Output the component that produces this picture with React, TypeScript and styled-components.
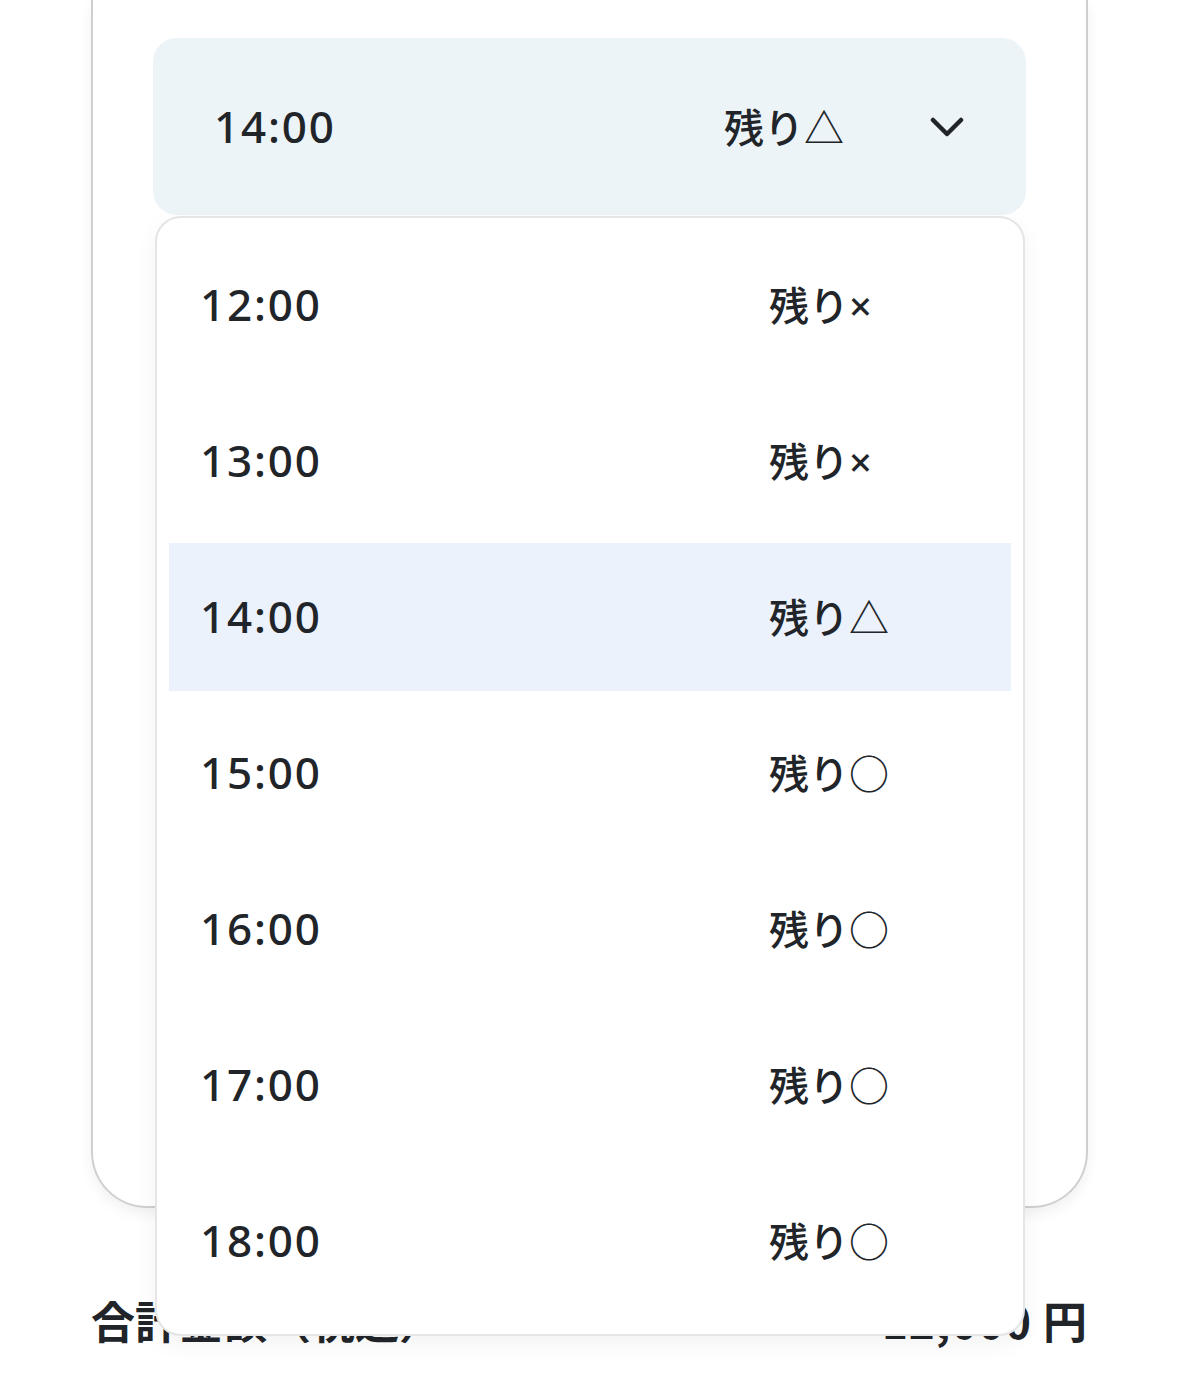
import * as React from "react";
import styled, { createGlobalStyle } from "styled-components";

const GlobalStyle = createGlobalStyle`
  html, body {
    margin: 0;
    padding: 0;
    background: #ffffff;
  }
  body {
    font-family: "Noto Sans", "Noto Sans CJK JP", sans-serif;
    color: #212529;
  }
`;

const SPage = styled.div`
  width: 1179px;
  height: 1376px;
  overflow: hidden;
  padding: 0 91px;
  box-sizing: border-box;
`;

const SCard = styled.div`
  position: relative;
  border: 2px solid #cfcfcf;
  border-top: none;
  border-radius: 0 0 56px 56px;
  box-shadow: 0 6px 14px rgba(0, 0, 0, 0.06);
  padding: 38px 60px 0;
  height: 1208px;
  box-sizing: border-box;
`;

const SSelect = styled.div`
  position: relative;
`;

const STrigger = styled.div`
  height: 177px;
  box-sizing: border-box;
  border-radius: 24px;
  background: #edf4f8;
  display: flex;
  align-items: center;
  padding: 0 62px 2px 61px;
`;

const STime = styled.span`
  flex: 1;
  font-size: 44px;
  font-weight: 500;
  letter-spacing: 1.8px;
`;

const SStatus = styled.span<{ $width: number }>`
  width: ${(p) => p.$width}px;
  white-space: nowrap;
  font-size: 40px;
  font-weight: 500;
`;

const SChevron = styled.svg`
  width: 34px;
  height: 22px;
  display: block;
  margin-top: 4px;
`;

const SMenu = styled.ul`
  position: absolute;
  top: 178px;
  left: 2px;
  right: 1px;
  margin: 0;
  list-style: none;
  background: #ffffff;
  border: 2px solid #e4e5e7;
  border-radius: 26px;
  box-shadow: 0 8px 24px rgba(0, 0, 0, 0.05);
  padding: 13px 12px 19px;
  display: flex;
  flex-direction: column;
  gap: 8px;
  z-index: 2;
`;

const SOption = styled.li<{ $active?: boolean }>`
  height: 148px;
  display: flex;
  align-items: center;
  padding: 0 0 2px 31px;
  box-sizing: border-box;
  background: ${(p) => (p.$active ? "#ebf2fc" : "transparent")};
`;

const STotal = styled.div`
  display: flex;
  align-items: center;
  justify-content: space-between;
  margin-top: 82px;
  font-family: "Noto Sans CJK JP", sans-serif;
  font-size: 44px;
  font-weight: 700;
  line-height: 60px;
`;

const SPrice = styled.span`
  letter-spacing: 1px;
`;

const slots = [
  { time: "12:00", status: "残り×" },
  { time: "13:00", status: "残り×" },
  { time: "14:00", status: "残り△" },
  { time: "15:00", status: "残り○" },
  { time: "16:00", status: "残り○" },
  { time: "17:00", status: "残り○" },
  { time: "18:00", status: "残り○" },
];

const App = () => {
  const selected = "14:00";
  const current = slots.find((s) => s.time === selected)!;

  return (
    <>
      <GlobalStyle />
      <SPage>
        <SCard>
          <SSelect>
            <STrigger>
              <STime>{current.time}</STime>
              <SStatus $width={206}>{current.status}</SStatus>
              <SChevron viewBox="0 0 34 22">
                <polyline
                  points="3,3 17,17 31,3"
                  fill="none"
                  stroke="#212529"
                  strokeWidth="4.5"
                  strokeLinecap="round"
                  strokeLinejoin="round"
                />
              </SChevron>
            </STrigger>
            <SMenu>
              {slots.map((s) => (
                <SOption key={s.time} $active={s.time === selected}>
                  <STime>{s.time}</STime>
                  <SStatus $width={242}>{s.status}</SStatus>
                </SOption>
              ))}
            </SMenu>
          </SSelect>
        </SCard>
        <STotal>
          <span>合計金額（税込）</span>
          <SPrice>12,000 円</SPrice>
        </STotal>
      </SPage>
    </>
  );
};

export default App;
